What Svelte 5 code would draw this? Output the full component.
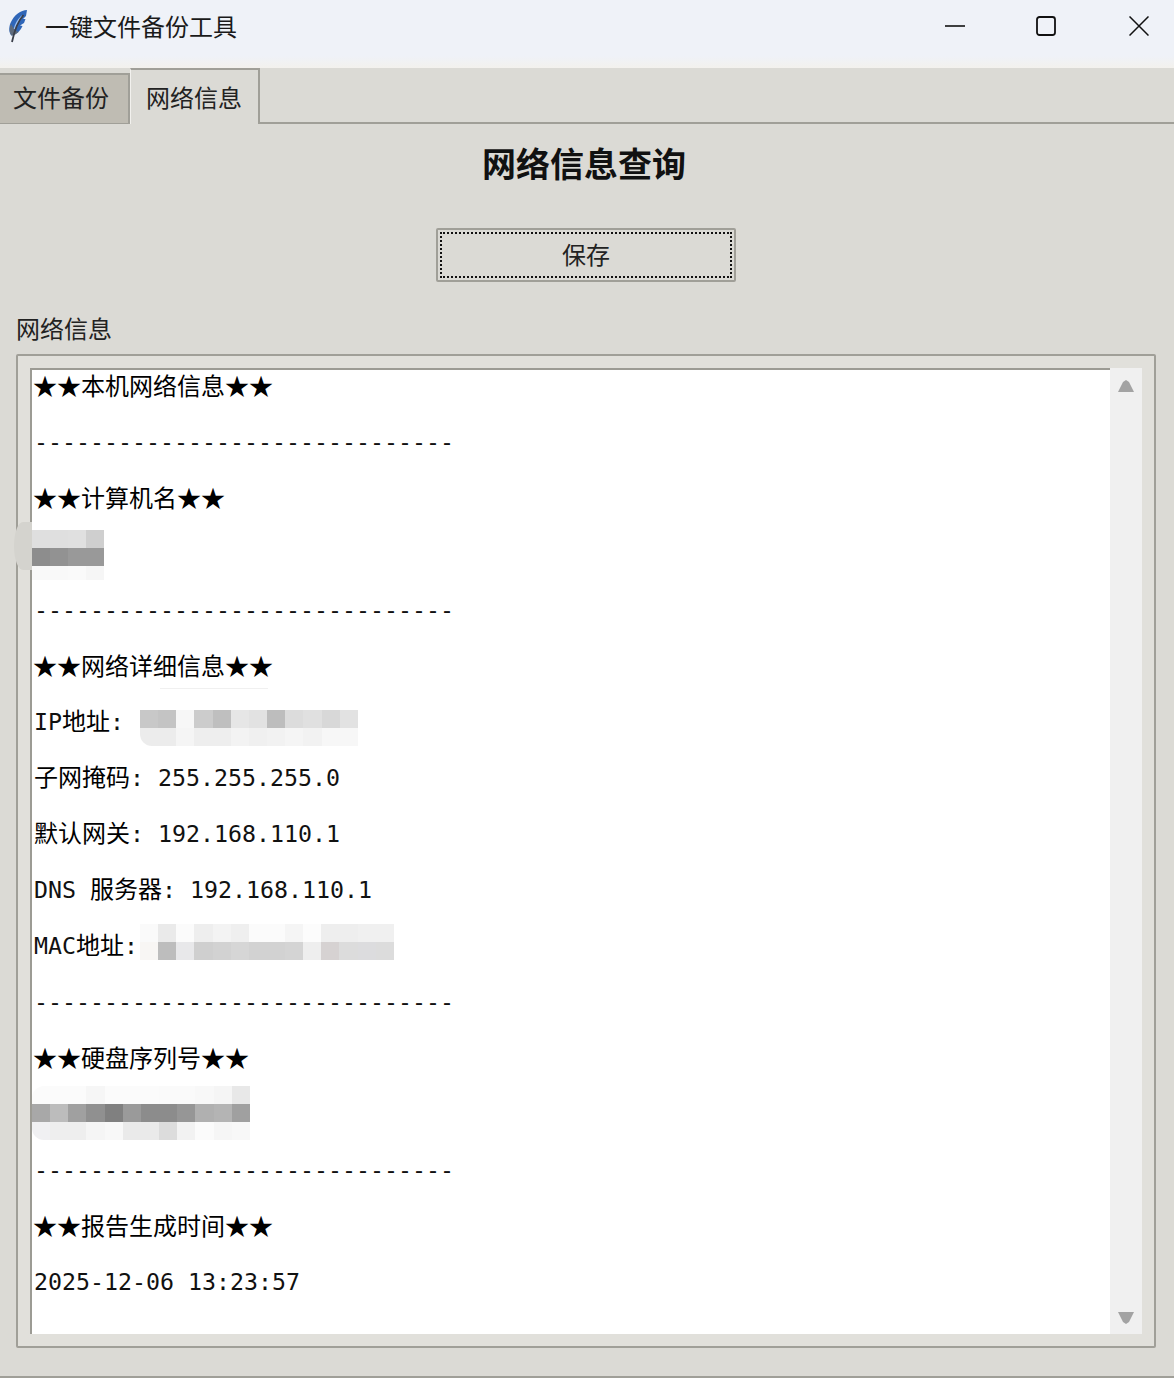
<script lang="ts">
  // redacted values in the screenshot, one array per mosaic row
  const hostCells = [
    { h: 18, c: ["#dfdfdf", "#dfdfdf", "#e0e0e0", "#cfcfcf"] },
    { h: 18, c: ["#8d8d8d", "#929292", "#999999", "#999999"] },
    { h: 14, c: ["#f9f9f9", "#f9f9f9", "#fafafa", "#f6f6f6"] }
  ];
  const ipCells = [
    { h: 18, c: ["#c8c8c8", "#c4c4c4", "#f7f7f7", "#cccccc", "#bfbfbf", "#e6e6e6", "#e2e2e2", "#bdbdbd", "#dcdcdc", "#e0e0e0", "#d8d8d8", "#e2e2e2"] },
    { h: 18, c: ["#ececec", "#ececec", "#f5f5f5", "#eeeeee", "#eeeeee", "#f3f3f3", "#f0f0f0", "#f2f2f2", "#f5f5f5", "#f2f2f2", "#f7f7f7", "#f7f7f7"] }
  ];
  const macCells = [
    { h: 18, c: ["#fafafa", "#eaeaea", "#fbfbfb", "#eeeeee", "#f3f3f3", "#efefef", "#fbfbfb", "#fbfbfb", "#f5f5f5", "#fcfcfc", "#eeeeee", "#eeeeee", "#f0f0f0", "#f0f0f0"] },
    { h: 18, c: ["#f8f6f4", "#bdbdbd", "#e8e8ea", "#cfcfcf", "#d2d2d2", "#d6d6d6", "#d2d2d2", "#d2d2d2", "#d4d4d4", "#eeeeee", "#d6d2d2", "#dcdcdc", "#dcdcde", "#dcdcdc"] }
  ];
  const diskCells = [
    { h: 18, c: ["#fbfbfb", "#fbfbfb", "#fbfbfb", "#f6f6f6", "#fbfbfb", "#fbfbfb", "#fbfbfb", "#fafafa", "#fafafa", "#f8f8f8", "#f5f5f5", "#e8e8e8"] },
    { h: 18, c: ["#a8a8a8", "#bcbcbc", "#a0a0a0", "#909090", "#808080", "#9a9a9a", "#8c8c8c", "#8c8c8c", "#969696", "#b0b0b0", "#b4b4b4", "#a0a0a0"] },
    { h: 18, c: ["#f0f0f2", "#eeeeee", "#eeeeee", "#f5f5f5", "#f8f8f8", "#eaeaea", "#eaeaea", "#dcdcdc", "#f2f2f2", "#fbfbfb", "#f6f6f6", "#f8f8f8"] }
  ];
  const dashes = "-".repeat(30);
</script>

{#snippet mosaic(rows, left, top, cell, radius)}
  <div class="mosaic" style="left:{left}px;top:{top}px;border-radius:{radius}">
    {#each rows as row}
      <div class="mrow" style="height:{row.h}px">
        {#each row.c as color}
          <span style="width:{cell}px;background:{color}"></span>
        {/each}
      </div>
    {/each}
  </div>
{/snippet}

<div class="window">
  <header class="titlebar">
    <svg class="feather" width="22" height="34" viewBox="0 0 22 34">
      <path d="M20 1C14 1 7 6 3.500 14C1.500 19 2 24 4.500 26.500C9 26 13.500 22 15.500 17L13 16.500L17 14L18.500 10L16 10L19 7Z" fill="#2f66b8"/>
      <path d="M4 15C2 20 2.500 24 4.500 26.500C7 26.300 9.500 25 11.500 23C9 22 6 19 4 15Z" fill="#5d6a7c"/>
      <path d="M15 7C11 11 8.500 15 7.500 20" fill="none" stroke="#9cc0f0" stroke-width="1.600"/>
      <path d="M16.500 6C11 12 7.500 21 5 33" fill="none" stroke="#3a3f4a" stroke-width="1.800"/>
    </svg>
    <span class="apptitle">一键文件备份工具</span>
    <div class="controls">
      <svg width="20" height="20" viewBox="0 0 20 20"><path d="M0 10H20" stroke="#111" stroke-width="1.600"/></svg>
      <svg width="20" height="20" viewBox="0 0 20 20"><rect x="1" y="1" width="18" height="18" rx="2.500" fill="none" stroke="#111" stroke-width="1.800"/></svg>
      <svg class="close" width="20" height="20" viewBox="0 0 20 20"><path d="M0.500 0.500L19.500 19.500M19.500 0.500L0.500 19.500" stroke="#111" stroke-width="1.500"/></svg>
    </div>
  </header>

  <main class="notebook">
    <nav class="tabs">
      <div class="tab">文件备份</div>
      <div class="tab active">网络信息</div>
    </nav>

    <h1>网络信息查询</h1>

    <button type="button" class="save"><span>保存</span></button>

    <div class="label">网络信息</div>

    <section class="frame">
      <div class="text">
        <div class="row cn">★★本机网络信息★★</div>
        <div class="row">{dashes}</div>
        <div class="row cn">★★计算机名★★</div>
        <div class="row">
          <i class="smudge"></i>
          {@render mosaic(hostCells, -2, -10, 18, "0")}
        </div>
        <div class="row">{dashes}</div>
        <div class="row cn">★★网络详细信息★★</div>
        <div class="row">
          IP<span class="cn">地址</span>:<i class="streak"></i>
          {@render mosaic(ipCells, 106, 2, 18.160, "0 0 0 12px")}
        </div>
        <div class="row"><span class="cn">子网掩码</span>: 255.255.255.0</div>
        <div class="row"><span class="cn">默认网关</span>: 192.168.110.1</div>
        <div class="row">DNS <span class="cn">服务器</span>: 192.168.110.1</div>
        <div class="row">
          MAC<span class="cn">地址</span>:
          {@render mosaic(macCells, 106, -8, 18.140, "0")}
        </div>
        <div class="row">{dashes}</div>
        <div class="row cn">★★硬盘序列号★★</div>
        <div class="row">
          {@render mosaic(diskCells, -2, -14, 18.160, "12px 0 0 12px")}
        </div>
        <div class="row">{dashes}</div>
        <div class="row cn">★★报告生成时间★★</div>
        <div class="row">2025-12-06 13:23:57</div>
      </div>
      <div class="scrollbar">
        <svg width="16" height="12" viewBox="0 0 16 12"><path d="M8 0L11 2L16 12H0L5 2Z" fill="#a3a3a3"/></svg>
        <svg width="16" height="12" viewBox="0 0 16 12"><path d="M0 0H16L11 10L8 12L5 10Z" fill="#a3a3a3"/></svg>
      </div>
    </section>
  </main>
</div>

<style>
  :global(body) {
    margin: 0;
    background: #dbdad5;
  }
  .window {
    width: 1174px;
    height: 1378px;
    display: flex;
    flex-direction: column;
    font-family: "Noto Sans CJK SC", "Noto Sans", sans-serif;
    color: #111;
    overflow: hidden;
  }
  .titlebar {
    height: 68px;
    box-sizing: border-box;
    display: flex;
    align-items: center;
    background: linear-gradient(#eff2f8 0, #eff2f8 56px, #f3f1ed 68px);
    padding: 0 0 16px 7px;
  }
  .feather {
    margin-right: 16px;
  }
  .apptitle {
    font-size: 24px;
    line-height: 28px;
    color: #1a1a1a;
  }
  .controls {
    margin-left: auto;
    display: flex;
    align-items: center;
    gap: 71px;
    padding-right: 25px;
    height: 20px;
  }
  .close {
    margin-left: 2px;
  }
  .notebook {
    flex: 1;
    display: flex;
    flex-direction: column;
    background: #dbdad5;
    border-bottom: 2px solid #a09f98;
  }
  .tabs {
    height: 56px;
    box-sizing: border-box;
    display: flex;
    align-items: flex-end;
    border-bottom: 2px solid #a09f98;
  }
  .tab {
    width: 130px;
    height: 50px;
    box-sizing: border-box;
    margin-bottom: -1px;
    background: #bfbcb3;
    border-top: 2px solid #a09f98;
    border-right: 2px solid #a09f98;
    font-size: 24px;
    line-height: 44px;
    padding-left: 13px;
    color: #222;
  }
  .tab.active {
    height: 56px;
    margin-bottom: -2px;
    background: #dbdad5;
    border-left: 1px solid #f2f1ee;
    padding-left: 15px;
    line-height: 54px;
  }
  h1 {
    margin: 20px 0 0;
    padding: 0 6px 2px 0;
    font-size: 34px;
    line-height: 38px;
    font-weight: 700;
    text-align: center;
    color: #111;
  }
  .save {
    appearance: none;
    align-self: center;
    width: 300px;
    height: 54px;
    margin: 44px 0 0 -2px;
    padding: 2px;
    box-sizing: border-box;
    background: #dbdad5;
    border: 2px solid #a09f98;
    border-radius: 2px;
    font: inherit;
    color: #222;
  }
  .save span {
    display: block;
    height: 100%;
    box-sizing: border-box;
    border: 2px dotted #111;
    font-size: 24px;
    line-height: 40px;
  }
  .label {
    height: 28px;
    margin: 33px 0 0 16px;
    font-size: 24px;
    line-height: 26px;
    color: #222;
  }
  .frame {
    margin: 11px 18px 0 16px;
    height: 994px;
    box-sizing: border-box;
    display: flex;
    padding: 12px;
    background: #e1e0db;
    border: 2px solid #a09f98;
    border-radius: 2px;
  }
  .text {
    flex: 1;
    box-sizing: border-box;
    background: #fff;
    border-left: 2px solid #9c9b94;
    border-top: 2px solid #9c9b94;
    padding: 2px 0 0 2px;
    font-family: "DejaVu Sans Mono", "Noto Sans CJK SC", monospace;
    font-size: 23.250px;
    color: #111;
  }
  .row {
    position: relative;
    height: 28px;
    line-height: 28px;
    margin-bottom: 28px;
    white-space: pre;
  }
  .cn {
    font-family: "Noto Sans CJK SC", sans-serif;
    font-size: 24px;
    line-height: 0;
    color: #000;
  }
  .row.cn {
    line-height: 26px;
    margin-left: -1px;
  }
  .mosaic {
    position: absolute;
    overflow: hidden;
  }
  .mrow {
    display: flex;
  }
  .mrow span {
    flex: none;
    height: 100%;
  }
  .smudge {
    position: absolute;
    left: -20px;
    top: -18px;
    width: 18px;
    height: 48px;
    border-radius: 50% 0 0 50%;
    background: #d4d3ce;
  }
  .streak {
    position: absolute;
    left: 126px;
    top: -20px;
    width: 108px;
    height: 1px;
    background: #f0f0f0;
  }
  .scrollbar {
    width: 32px;
    box-sizing: border-box;
    background: #f0f0f0;
    display: flex;
    flex-direction: column;
    justify-content: space-between;
    align-items: center;
    padding: 12px 0 10px;
  }
</style>
